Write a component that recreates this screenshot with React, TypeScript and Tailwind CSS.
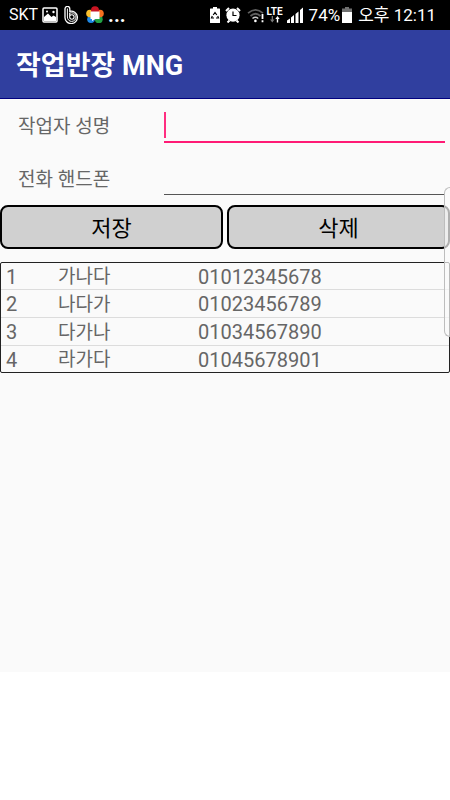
import { useState } from "react";

type Worker = { id: number; name: string; phone: string };

const workers: Worker[] = [
  { id: 1, name: "가나다", phone: "01012345678" },
  { id: 2, name: "나다가", phone: "01023456789" },
  { id: 3, name: "다가나", phone: "01034567890" },
  { id: 4, name: "라가다", phone: "01045678901" },
];

function PictureIcon() {
  return (
    <svg width="16" height="16" viewBox="0 0 16 16" fill="none">
      <rect x="1" y="1" width="14" height="14" rx="1" stroke="#fff" strokeWidth="1.500" />
      <path d="M2 14v-4l4-3.500 3.500 3.500 2-1.500L14 10v4z" fill="#fff" />
      <circle cx="5" cy="4.500" r="1" fill="#fff" />
      <circle cx="11.500" cy="5" r="1.200" fill="#fff" />
    </svg>
  );
}

function BandIcon() {
  return (
    <svg width="16" height="18" viewBox="0 0 16 18" fill="none" stroke="#fff">
      <path d="M1 11V2.800a2 2 0 0 1 4.800 0v2.500a6.200 6.200 0 1 1-4.800 5.700z" strokeWidth="1.300" />
      <path d="M3.400 2.500V11a4.300 4.300 0 1 0 4.300-4.200c-1 0-1.500.2-2 .5" strokeWidth="1" />
      <path d="M5.700 6.500V11a2.200 2.200 0 1 0 2.200-2.200c-1 0-1.700.5-2.200 1.200" strokeWidth="1.100" />
    </svg>
  );
}

function FlowerIcon() {
  return (
    <svg width="18" height="18" viewBox="0 0 18 18">
      <circle cx="5" cy="13.200" r="3.800" fill="#1e88e5" />
      <circle cx="12.800" cy="13.200" r="3.900" fill="#22a244" />
      <circle cx="4" cy="7.500" r="3.800" fill="#fbc02d" />
      <circle cx="14" cy="7.500" r="3.800" fill="#f5701f" />
      <circle cx="9" cy="4.200" r="4" fill="#c91522" />
      <path d="M4.500 5.500h9V13H9.500L6 15v-2H4.500z" fill="#fff" />
    </svg>
  );
}

function RecycleBatteryIcon() {
  return (
    <svg width="12" height="16" viewBox="0 0 12 16" fill="none">
      <path d="M4 0h4v1.500h2.500q.500 0 .500.500v13.500q0 .500-.500.500h-9q-.500 0-.500-.500V2q0-.500.500-.500H4z" fill="#fff" />
      <path d="M4.200 8L6 5.500 7.800 8M8.700 9l.800 2H7M5 11H2.500l.800-2" stroke="#000" strokeWidth="1.200" />
    </svg>
  );
}

function AlarmIcon() {
  return (
    <svg width="16" height="16" viewBox="0 0 16 16" fill="none">
      <path d="M1 4L4 1M12 1l3 3M2.500 15.500l2-2M13.500 15.500l-2-2" stroke="#fff" strokeWidth="2" />
      <circle cx="8" cy="8.200" r="6.600" fill="#fff" />
      <path d="M8 4.500v4h3.500" stroke="#000" strokeWidth="1.200" />
    </svg>
  );
}

function WifiAlertIcon() {
  return (
    <svg width="18" height="15" viewBox="0 0 18 15" fill="none">
      <path d="M1 5.200q7.500-6.600 15 0M3.500 8q5-4.500 10 0" stroke="#606060" strokeWidth="1.700" />
      <path d="M5.500 10.500q3-2.500 5.700 0" stroke="#ccc" strokeWidth="1.600" />
      <circle cx="8.400" cy="12.900" r="1.300" fill="#fff" />
      <path d="M15.500 6v5M15.500 12.300v2" stroke="#fff" strokeWidth="1.800" />
    </svg>
  );
}

function DataArrowsIcon() {
  return (
    <svg width="10" height="7" viewBox="0 0 10 7">
      <path d="M1.700 0h1.300v3.500h1.500L2.300 6.500 0 3.500h1.700z" fill="#777" />
      <path d="M6.800 6.500h1.400V3h1.500L7.500 0 5.300 3h1.500z" fill="#fff" />
    </svg>
  );
}

function SignalIcon() {
  return (
    <svg width="16" height="16" viewBox="0 0 16 16" fill="#fff">
      <path d="M0 13.500l3-2V16H0zM4 10.500l3-2.500v8H4zM8.500 7l3-2.500V16h-3zM13 3l3-2.500V16h-3z" />
    </svg>
  );
}

function BatteryIcon() {
  return (
    <svg width="10" height="16" viewBox="0 0 10 16">
      <path d="M3 0h4v1.500h3V5H0V1.500h3z" fill="#707070" />
      <path d="M0 5h10v11H0z" fill="#fff" />
    </svg>
  );
}

function StatusBar() {
  return (
    <header className="flex h-[30px] items-center justify-between bg-black pr-[14px] pl-[9px] text-[17px] leading-5 whitespace-nowrap text-white">
      <div className="flex items-center">
        <span className="text-[16px]">SKT</span>
        <span className="ml-1 flex items-center gap-[6px]">
          <PictureIcon />
          <BandIcon />
          <FlowerIcon />
        </span>
        <span className="ml-1 text-[20px] font-bold">...</span>
      </div>
      <div className="flex items-center">
        <span className="flex items-center gap-1">
          <RecycleBatteryIcon />
          <AlarmIcon />
        </span>
        <span className="ml-[6px]">
          <WifiAlertIcon />
        </span>
        <span className="ml-px flex flex-col items-center">
          <span className="text-[10px] leading-[9px] font-bold">LTE</span>
          <DataArrowsIcon />
        </span>
        <span className="mr-[6px] ml-1">
          <SignalIcon />
        </span>
        <span>74%</span>
        <span className="mr-[6px] ml-[2px]">
          <BatteryIcon />
        </span>
        <span>오후 12:11</span>
      </div>
    </header>
  );
}

export default function App() {
  const [name, setName] = useState("");
  const [phone, setPhone] = useState("");

  return (
    <div className="min-h-screen bg-white font-[Roboto,'Noto_Sans_CJK_KR',sans-serif]">
      <div className="relative min-h-[672px] bg-[#fafafa] text-[#666]">
        <StatusBar />
        <div className="flex h-[69px] items-center border-b border-[#00007f] bg-[#303f9f] px-4 pt-1">
          <h1 className="text-[27px] leading-8 font-bold text-white">작업반장 MNG</h1>
        </div>

        <form onSubmit={(e) => e.preventDefault()}>
          <div className="flex h-[53px] items-start pr-[5px] pl-[18px]">
            <label htmlFor="name" className="w-[146px] shrink-0 pt-4 text-[19px] leading-6">
              작업자 성명
            </label>
            <div className="flex h-11 min-w-0 flex-1 items-end border-b-2 border-[#ff1a75] pb-[3px]">
              <span className="h-[26px] w-[2px] bg-[#ff2d80]" />
              <input
                id="name"
                type="text"
                value={name}
                onChange={(e) => setName(e.target.value)}
                className="h-[26px] min-w-0 flex-1 bg-transparent px-1 text-[19px] caret-transparent outline-none"
              />
            </div>
          </div>
          <div className="flex h-[53px] items-start pr-[5px] pl-[18px]">
            <label htmlFor="phone" className="w-[146px] shrink-0 pt-4 text-[19px] leading-6">
              전화 핸드폰
            </label>
            <input
              id="phone"
              type="tel"
              value={phone}
              onChange={(e) => setPhone(e.target.value)}
              className="h-[43px] min-w-0 flex-1 border-b border-[#555] bg-transparent px-1 text-[19px] outline-none"
            />
          </div>
          <div className="grid grid-cols-2 gap-1 text-[22px] leading-7 text-black">
            <button type="submit" className="h-11 rounded-lg border-2 border-black bg-[#d0d0d0] pt-[3px]">
              저장
            </button>
            <button type="button" className="h-11 rounded-lg border-2 border-black bg-[#d0d0d0] pt-[3px]">
              삭제
            </button>
          </div>
        </form>

        <div className="mt-[13px] rounded-xs border border-[#222]">
          <table className="w-full table-fixed text-left text-[20px] leading-[25px]">
            <colgroup>
              <col className="w-[51px]" />
              <col className="w-[140px]" />
              <col />
            </colgroup>
            <tbody className="divide-y divide-[#dcdcdc]">
              {workers.map((w) => (
                <tr key={w.id} className="first:leading-6 last:leading-6">
                  <td className="pt-[2px] pl-[5px]">{w.id}</td>
                  <td className="pt-[2px] pl-[6px] text-[19px]">{w.name}</td>
                  <td className="pt-[2px] pl-[6px]">{w.phone}</td>
                </tr>
              ))}
            </tbody>
          </table>
        </div>

        <div className="absolute top-[187px] right-0 h-[150px] w-[6px] rounded-l-md border border-r-0 border-[#bdbdbd] bg-[#fafafa]/70" />
      </div>
    </div>
  );
}
